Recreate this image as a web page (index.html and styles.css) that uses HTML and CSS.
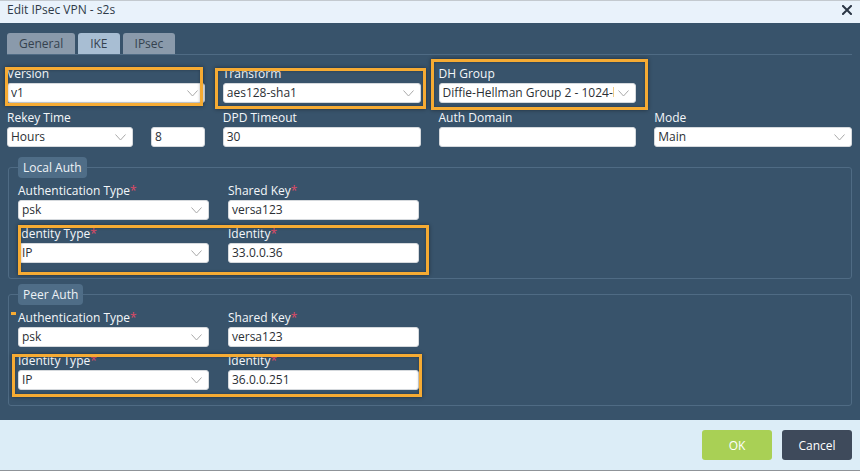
FILE: index.html
```html
<!DOCTYPE html>
<html>
<head>
<meta charset="utf-8">
<link rel="stylesheet" href="styles.css">
</head>
<body>
<div class="dialog">
  <div class="titlebar">
    <span class="title">Edit IPsec VPN - s2s</span>
    <svg class="close" width="10" height="10" viewBox="0 0 10 10"><path d="M1 1L9 9M9 1L1 9" stroke="#2b3645" stroke-width="2" stroke-linecap="square"/></svg>
  </div>
  <div class="content">
    <div class="tabs">
      <div class="tab">General</div>
      <div class="tab active">IKE</div>
      <div class="tab">IPsec</div>
    </div>
    <div class="grid4 first">
      <div class="field">
        <label>Version</label>
        <div class="select"><span class="val">v1</span><svg class="chev" width="11" height="7" viewBox="0 0 11 7"><path d="M0.5 0.5L5.5 6L10.5 0.5" fill="none" stroke="#a9a9a9" stroke-width="1"/></svg></div>
      </div>
      <div class="field">
        <label>Transform</label>
        <div class="select"><span class="val">aes128-sha1</span><svg class="chev" width="11" height="7" viewBox="0 0 11 7"><path d="M0.5 0.5L5.5 6L10.5 0.5" fill="none" stroke="#a9a9a9" stroke-width="1"/></svg></div>
      </div>
      <div class="field">
        <label>DH Group</label>
        <div class="select"><span class="val">Diffie-Hellman Group 2 - 1024-bit</span><svg class="chev" width="11" height="7" viewBox="0 0 11 7"><path d="M0.5 0.5L5.5 6L10.5 0.5" fill="none" stroke="#a9a9a9" stroke-width="1"/></svg></div>
      </div>
      <div class="field"></div>
    </div>
    <div class="grid4 second">
      <div class="field">
        <label>Rekey Time</label>
        <div class="split">
          <div class="select rekey"><span class="val">Hours</span><svg class="chev" width="11" height="7" viewBox="0 0 11 7"><path d="M0.5 0.5L5.5 6L10.5 0.5" fill="none" stroke="#a9a9a9" stroke-width="1"/></svg></div>
          <div class="input small">8</div>
        </div>
      </div>
      <div class="field">
        <label>DPD Timeout</label>
        <div class="input">30</div>
      </div>
      <div class="field">
        <label>Auth Domain</label>
        <div class="input"></div>
      </div>
      <div class="field">
        <label>Mode</label>
        <div class="select"><span class="val">Main</span><svg class="chev" width="11" height="7" viewBox="0 0 11 7"><path d="M0.5 0.5L5.5 6L10.5 0.5" fill="none" stroke="#a9a9a9" stroke-width="1"/></svg></div>
      </div>
    </div>

    <div class="group local">
      <div class="legend">Local Auth</div>
      <div class="grid2">
        <div class="field">
          <label>Authentication Type<span class="req">*</span></label>
          <div class="select"><span class="val">psk</span><svg class="chev" width="11" height="7" viewBox="0 0 11 7"><path d="M0.5 0.5L5.5 6L10.5 0.5" fill="none" stroke="#a9a9a9" stroke-width="1"/></svg></div>
        </div>
        <div class="field">
          <label>Shared Key<span class="req">*</span></label>
          <div class="input">versa123</div>
        </div>
        <div class="field">
          <label>Identity Type<span class="req">*</span></label>
          <div class="select"><span class="val">IP</span><svg class="chev" width="11" height="7" viewBox="0 0 11 7"><path d="M0.5 0.5L5.5 6L10.5 0.5" fill="none" stroke="#a9a9a9" stroke-width="1"/></svg></div>
        </div>
        <div class="field">
          <label>Identity<span class="req">*</span></label>
          <div class="input">33.0.0.36</div>
        </div>
      </div>
    </div>

    <div class="group peer">
      <div class="legend">Peer Auth</div>
      <div class="grid2">
        <div class="field">
          <label>Authentication Type<span class="req">*</span></label>
          <div class="select"><span class="val">psk</span><svg class="chev" width="11" height="7" viewBox="0 0 11 7"><path d="M0.5 0.5L5.5 6L10.5 0.5" fill="none" stroke="#a9a9a9" stroke-width="1"/></svg></div>
        </div>
        <div class="field">
          <label>Shared Key<span class="req">*</span></label>
          <div class="input">versa123</div>
        </div>
        <div class="field">
          <label>Identity Type<span class="req">*</span></label>
          <div class="select"><span class="val">IP</span><svg class="chev" width="11" height="7" viewBox="0 0 11 7"><path d="M0.5 0.5L5.5 6L10.5 0.5" fill="none" stroke="#a9a9a9" stroke-width="1"/></svg></div>
        </div>
        <div class="field">
          <label>Identity<span class="req">*</span></label>
          <div class="input">36.0.0.251</div>
        </div>
      </div>
    </div>
  </div>
  <div class="footer">
    <button class="btn ok">OK</button>
    <button class="btn cancel">Cancel</button>
  </div>

  <div class="mark m-version"></div>
  <div class="mark m-transform"></div>
  <div class="mark m-dh"></div>
  <div class="mark m-local"></div>
  <div class="mark m-peer"></div>
  <div class="mark-dash"></div>
</div>
</body>
</html>
```

FILE: styles.css
```css
* { box-sizing: border-box; }
html, body { margin: 0; padding: 0; }
body {
  font-family: "Open Sans", "Noto Sans", sans-serif;
  font-size: 12px;
  background: #dcedf7;
}
.dialog {
  position: relative;
  width: 860px;
  height: 471px;
  overflow: hidden;
}
.titlebar {
  height: 23px;
  background: #e9f2fb;
  border-top: 1px solid #c3c9cf;
  display: flex;
  align-items: flex-start;
  justify-content: space-between;
  padding: 0 8px 0 7px;
}
.title {
  line-height: 17px;
  color: #2e3a48;
  font-size: 12px;
}
.close { margin-top: 4px; }
.content {
  height: 397px;
  background: #38536b;
  padding: 10px 8px 0 7px;
}
.tabs {
  display: flex;
  gap: 3px;
  height: 22px;
  border-bottom: 1px solid #4f6b84;
}
.tab {
  height: 21px;
  line-height: 21px;
  padding: 0 12px;
  background: #8a9aab;
  color: #35424f;
  border-radius: 3px 3px 0 0;
  font-size: 12px;
}
.tab.active { background: #a8bed3; }
.grid4 {
  display: grid;
  grid-template-columns: repeat(4, minmax(0, 1fr));
  column-gap: 18px;
}
.grid4.first { margin-top: 11px; }
.grid4.second { margin-top: 7px; }
.field { min-width: 0; }
.field label {
  display: block;
  height: 16px;
  line-height: 16px;
  color: #f4f7fa;
  margin-bottom: 1px;
  white-space: nowrap;
}
.req { color: #e04a66; }
.select, .input {
  height: 20px;
  background: #fff;
  border: 1px solid #d5d9dd;
  border-radius: 3px;
  color: #2b2f35;
  line-height: 18px;
  padding-left: 3px;
  white-space: nowrap;
  overflow: hidden;
  min-width: 0;
}
.select {
  display: flex;
  align-items: center;
}
.select .val {
  flex: 1;
  min-width: 0;
  overflow: hidden;
  white-space: nowrap;
}
.chev {
  flex: none;
  margin: 0 6px 0 4px;
}
.split {
  display: flex;
  gap: 18px;
}
.rekey { width: 126px; flex: none; }
.small { flex: 1; }
.group {
  margin-left: 1px;
  border: 1px solid #4f6b84;
  border-radius: 3px;
  padding: 0 10px 15px 9px;
}
.group.local { margin-top: 20px; }
.group.peer { margin-top: 15px; }
.legend {
  display: block;
  width: max-content;
  margin-top: -11px;
  height: 21px;
  line-height: 21px;
  padding: 0 5px;
  background: #4f6d87;
  color: #eef2f6;
  border-radius: 4px;
}
.grid2 {
  margin-top: 5px;
  display: grid;
  grid-template-columns: 191px 191px;
  column-gap: 19px;
  row-gap: 6px;
}
.footer {
  height: 51px;
  background: #dcedf7;
  border-bottom: 1px solid #8f9398;
  display: flex;
  justify-content: flex-end;
  align-items: flex-start;
  gap: 10px;
  padding: 10px 8px 0 0;
}
.btn {
  width: 70px;
  height: 30px;
  border: none;
  border-radius: 3px;
  color: #fff;
  font-family: "Open Sans", "Noto Sans", sans-serif;
  font-size: 12px;
  padding: 0;
}
.btn.ok { background: #a9d055; }
.btn.cancel { background: #3e4a5b; }
.mark {
  position: absolute;
  border: 3px solid #f6ab33;
  box-shadow: 0 0 4px rgba(0,0,0,0.45), inset 0 0 3px rgba(0,0,0,0.3);
}
.m-version { left: 5px; top: 67px; width: 198px; height: 39px; }
.m-transform { left: 215px; top: 68px; width: 211px; height: 41px; }
.m-dh { left: 431px; top: 59px; width: 217px; height: 51px; }
.m-local { left: 18px; top: 225px; width: 411px; height: 50px; }
.m-peer { left: 12px; top: 354px; width: 410px; height: 43px; }
.mark-dash {
  position: absolute;
  left: 11px;
  top: 312px;
  width: 5px;
  height: 3px;
  background: #f6ab33;
}
```
